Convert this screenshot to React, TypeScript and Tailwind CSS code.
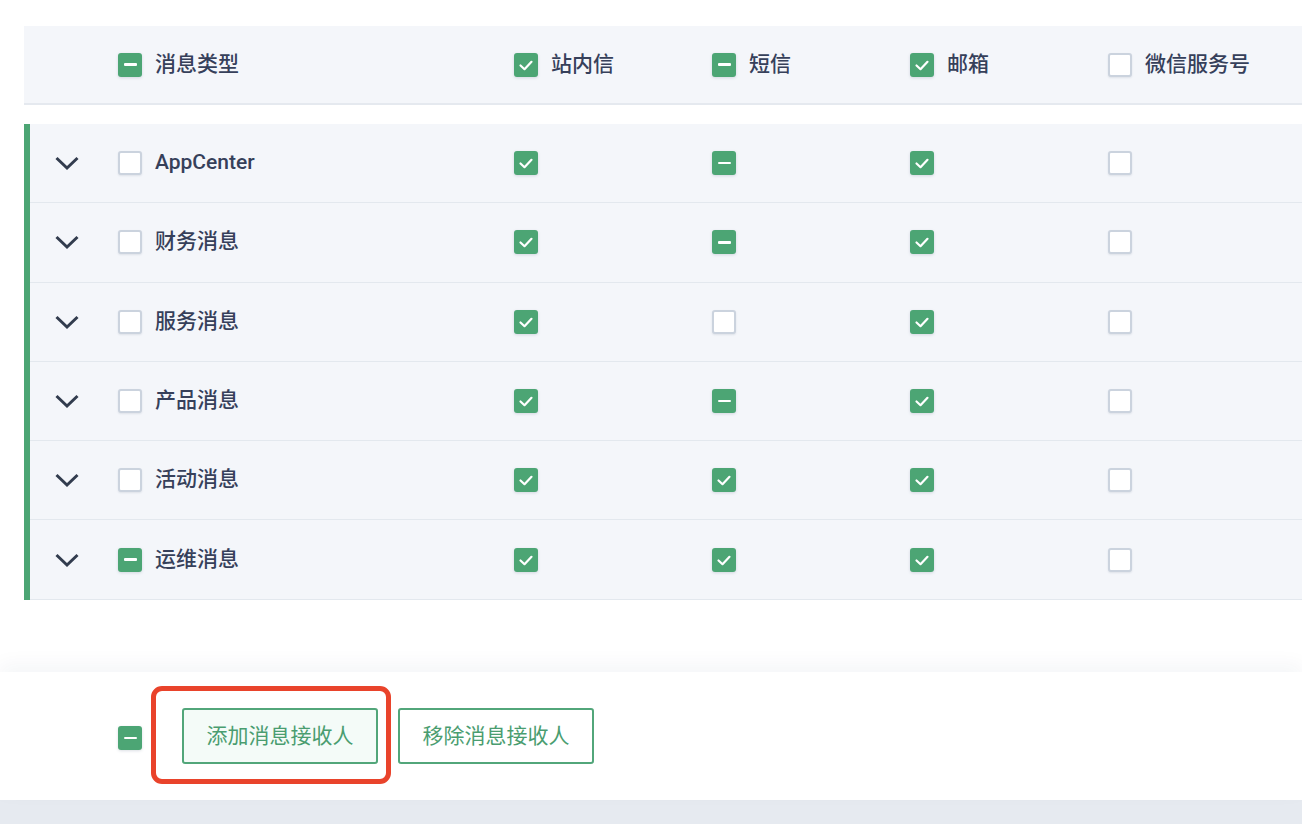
import React from "react";

type S = "on" | "off" | "mid";

function Box({ s }: { s: S }) {
  if (s === "off") {
    return (
      <div className="w-[24px] h-[24px] shrink-0 rounded-[3px] border-2 border-[#cbd3de] bg-white shadow-[0_1px_2px_rgba(60,80,110,0.12)]" />
    );
  }
  return (
    <div className="w-[24px] h-[24px] shrink-0 rounded-[3px] bg-[#4ca574] flex items-center justify-center shadow-[0_1px_3px_rgba(60,80,110,0.18)]">
      {s === "on" ? (
        <svg width="24" height="24" viewBox="0 0 24 24" fill="none">
          <path d="M6.5 12.5 L10.5 16.2 L17.5 8.8" stroke="white" strokeWidth="2.2" strokeLinecap="round" strokeLinejoin="round" />
        </svg>
      ) : (
        <div className="w-[13px] h-[2.5px] bg-white rounded-[1px]" />
      )}
    </div>
  );
}

function Chevron() {
  return (
    <svg width="26" height="16" viewBox="0 0 26 16" fill="none">
      <path d="M2.5 3 L13 13 L23.5 3" stroke="#323c4e" strokeWidth="3" strokeLinecap="butt" strokeLinejoin="miter" />
    </svg>
  );
}

const font = { fontFamily: 'Roboto, "Noto Sans CJK SC", "Noto Sans", sans-serif' };

const rows: { name: string; s: S; c: S[] }[] = [
  { name: "AppCenter", s: "off", c: ["on", "mid", "on", "off"] },
  { name: "财务消息", s: "off", c: ["on", "mid", "on", "off"] },
  { name: "服务消息", s: "off", c: ["on", "off", "on", "off"] },
  { name: "产品消息", s: "off", c: ["on", "mid", "on", "off"] },
  { name: "活动消息", s: "off", c: ["on", "on", "on", "off"] },
  { name: "运维消息", s: "mid", c: ["on", "on", "on", "off"] },
];

const cols: { label: string; s: S }[] = [
  { label: "站内信", s: "on" },
  { label: "短信", s: "mid" },
  { label: "邮箱", s: "on" },
  { label: "微信服务号", s: "off" },
];

export default function App() {
  return (
    <div className="w-[1302px] h-[824px] bg-white flex flex-col overflow-hidden text-[#36405a]" style={font}>
      <div className="pt-[26px] pl-[24px]">
        {/* header */}
        <div className="h-[79px] bg-[#f4f6fa] border-b-2 border-[#e5e9ef] flex items-center">
          <div className="w-[94px] shrink-0" />
          <div className="w-[396px] shrink-0 flex items-center gap-[13px]">
            <Box s="mid" />
            <span className="text-[21px] font-medium leading-none">消息类型</span>
          </div>
          {cols.map((c) => (
            <div key={c.label} className="w-[198px] shrink-0 flex items-center gap-[13px]">
              <Box s={c.s} />
              <span className="text-[21px] font-medium leading-none whitespace-nowrap">{c.label}</span>
            </div>
          ))}
        </div>

        {/* rows */}
        <div className="mt-[19px] border-l-[6px] border-[#4ca574] flex flex-col">
          {rows.map((r) => (
            <div key={r.name} className="h-[79.3px] bg-[#f4f6fa] border-b-[1.5px] border-[#e3e8ee] flex items-center">
              <div className="w-[88px] shrink-0 pl-[24px] flex items-center">
                <Chevron />
              </div>
              <div className="w-[396px] shrink-0 flex items-center gap-[13px]">
                <Box s={r.s} />
                <span className="text-[21px] font-medium leading-none -mt-[1px]">{r.name}</span>
              </div>
              {r.c.map((s, i) => (
                <div key={i} className="w-[198px] shrink-0 flex items-center">
                  <Box s={s} />
                </div>
              ))}
            </div>
          ))}
        </div>
      </div>

      <div className="flex-1" />

      {/* footer */}
      <div className="h-[128px] bg-white shadow-[0_-8px_18px_rgba(30,50,90,0.045)] flex items-center pl-[118px] relative">
        <div className="mt-[4px]">
          <Box s="mid" />
        </div>
        <div className="relative ml-[40px]">
          <div className="absolute left-[-31px] top-[-22px] w-[240px] h-[98px] border-[5px] border-[#e9432b] rounded-[11px] pointer-events-none" />
          <button className="w-[196px] h-[56px] border-2 border-[#52a67a] rounded-[3px] bg-[#f4fbf8] text-[#4a9d70] text-[21px] leading-none">
            添加消息接收人
          </button>
        </div>
        <button className="ml-[20px] w-[196px] h-[56px] border-2 border-[#52a67a] rounded-[3px] bg-white text-[#4a9d70] text-[21px] leading-none">
          移除消息接收人
        </button>
      </div>
      <div className="h-[24px] bg-[#e6eaf0] shrink-0" />
    </div>
  );
}
